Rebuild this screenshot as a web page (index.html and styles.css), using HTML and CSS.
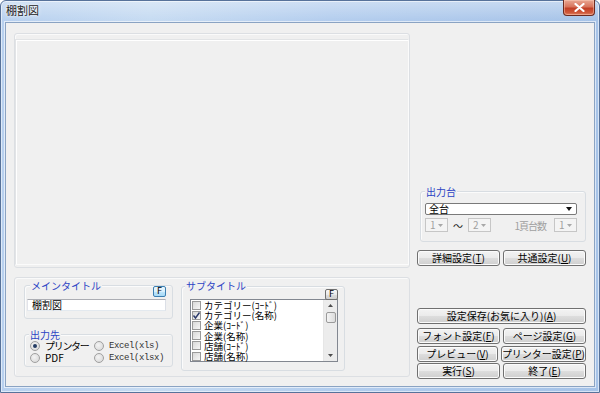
FILE: index.html
```html
<!DOCTYPE html>
<html lang="ja">
<head>
<meta charset="utf-8">
<title>棚割図</title>
<link rel="stylesheet" href="styles.css">
</head>
<body>
<div class="window">
  <div class="titlebar">
    <span class="title">棚割図</span>
    <div class="close">
      <svg width="11" height="9" viewBox="0 0 11 9"><path d="M1.5 1 L9.5 8 M9.5 1 L1.5 8" stroke="#fff" stroke-width="2.2" stroke-linecap="round"/></svg>
    </div>
  </div>
  <div class="client">
    <div class="left">
      <div class="bigbox"><div class="preview"></div></div>
      <div class="bottombox">
        <div class="col1">
          <div class="group g-main">
            <div class="group-head">
              <span class="group-label">メインタイトル</span>
              <span class="fbtn fbtn-hot">F</span>
            </div>
            <div class="textbox">棚割図</div>
          </div>
          <div class="group g-dest">
            <div class="group-head">
              <span class="group-label">出力先</span>
            </div>
            <div class="radios">
              <span class="radio checked"><span class="rdot"></span><span class="kana">プリンター</span></span>
              <span class="radio"><span class="rdot"></span><span class="mono">Excel(xls)</span></span>
              <span class="radio"><span class="rdot"></span>PDF</span>
              <span class="radio"><span class="rdot"></span><span class="mono">Excel(xlsx)</span></span>
            </div>
          </div>
        </div>
        <div class="group g-sub">
          <div class="group-head">
            <span class="group-label">サブタイトル</span>
            <span class="fbtn">F</span>
          </div>
          <div class="listbox">
            <div class="items">
              <div class="item"><span class="cb"></span>カテゴリー(ｺｰﾄﾞ)</div>
              <div class="item"><span class="cb"><svg width="9" height="9" viewBox="0 0 9 9"><path d="M1.5 4.5 L3.5 7 L7.5 1.5" stroke="#2b3a6b" stroke-width="1.4" fill="none"/></svg></span>カテゴリー(名称)</div>
              <div class="item"><span class="cb"></span>企業(ｺｰﾄﾞ)</div>
              <div class="item"><span class="cb"></span>企業(名称)</div>
              <div class="item"><span class="cb"></span>店舗(ｺｰﾄﾞ)</div>
              <div class="item"><span class="cb"></span>店舗(名称)</div>
            </div>
            <div class="scrollbar">
              <div class="sb-arrow"><svg width="5" height="3" viewBox="0 0 5 3"><path d="M0 3 L2.5 0 L5 3Z" fill="#4d4d4d"/></svg></div>
              <div class="sb-thumb"></div>
              <div class="sb-track"></div>
              <div class="sb-arrow"><svg width="5" height="3" viewBox="0 0 5 3"><path d="M0 0 L2.5 3 L5 0Z" fill="#4d4d4d"/></svg></div>
            </div>
          </div>
        </div>
      </div>
    </div>
    <div class="right">
      <div class="group g-out">
        <div class="group-head">
          <span class="group-label">出力台</span>
        </div>
        <div class="combo">
          <span>全台</span>
          <svg width="6" height="4" viewBox="0 0 6 4"><path d="M0 0 L6 0 L3 4Z" fill="#111"/></svg>
        </div>
        <div class="spinrow">
          <div class="spin"><span>1</span><svg width="5" height="3" viewBox="0 0 5 3"><path d="M0 0 L5 0 L2.5 3Z" fill="#a8a8a8"/></svg></div>
          <span class="tilde">〜</span>
          <div class="spin"><span>2</span><svg width="5" height="3" viewBox="0 0 5 3"><path d="M0 0 L5 0 L2.5 3Z" fill="#a8a8a8"/></svg></div>
          <span class="spin-label">1頁台数</span>
          <div class="spin"><span>1</span><svg width="5" height="3" viewBox="0 0 5 3"><path d="M0 0 L5 0 L2.5 3Z" fill="#a8a8a8"/></svg></div>
        </div>
      </div>
      <div class="btnrow row-detail">
        <div class="btn">詳細設定(<u>T</u>)</div>
        <div class="btn">共通設定(<u>U</u>)</div>
      </div>
      <div class="btn btn-wide">設定保存(お気に入り)(<u>A</u>)</div>
      <div class="btnrow row-a">
        <div class="btn">フォント設定(<u>F</u>)</div>
        <div class="btn">ページ設定(<u>G</u>)</div>
      </div>
      <div class="btnrow row-b">
        <div class="btn">プレビュー(<u>V</u>)</div>
        <div class="btn">プリンター設定(<u>P</u>)</div>
      </div>
      <div class="btnrow row-c">
        <div class="btn">実行(<u>S</u>)</div>
        <div class="btn">終了(<u>E</u>)</div>
      </div>
    </div>
  </div>
</div>
</body>
</html>
```

FILE: styles.css
```css
html, body {
  margin: 0;
  padding: 0;
}
body {
  width: 600px;
  height: 393px;
  overflow: hidden;
  font-family: "Noto Sans CJK JP", "Noto Sans", sans-serif;
  font-size: 10px;
  color: #000;
  background: #fff;
}
.window {
  width: 600px;
  height: 393px;
  box-sizing: border-box;
  border: 1px solid #57729a;
  border-radius: 6px 6px 0 0;
  background:
    linear-gradient(180deg, rgba(255,255,255,0.35) 0px, rgba(255,255,255,0) 20px),
    linear-gradient(90deg, #b7d0ef 0%, #c6dbf2 25%, #b3cdee 55%, #a6c3e8 100%);
  display: flex;
  flex-direction: column;
  box-shadow: inset 0 0 0 1px rgba(255,255,255,0.55);
}
.titlebar {
  height: 21px;
  flex: none;
  display: flex;
  justify-content: space-between;
  align-items: flex-start;
  padding-left: 5px;
}
.title {
  margin-top: 3px;
  font-size: 11px;
  line-height: 13px;
  color: #222;
  text-shadow: 0 0 4px rgba(255,255,255,0.9), 0 0 2px #fff;
}
.close {
  width: 32px;
  height: 16px;
  margin-right: 4px;
  margin-top: -1px;
  box-sizing: border-box;
  border: 1px solid #6b2a20;
  border-top: none;
  border-radius: 0 0 4px 4px;
  background: linear-gradient(180deg, #e9a793 0%, #d8745c 45%, #c23f26 55%, #cf5a3c 85%, #e0876a 100%);
  box-shadow: inset 0 0 0 1px rgba(255,210,190,0.45);
  display: flex;
  align-items: center;
  justify-content: center;
}
.client {
  flex: 1;
  margin: 0 4px 5px 4px;
  border: 1px solid #8aa3c3;
  background: #f0f0f0;
  display: flex;
  gap: 7px;
  padding: 10px 8px 7px 8px;
  box-shadow: 0 0 0 1px rgba(255,255,255,0.6);
}
.left {
  width: 396px;
  display: flex;
  flex-direction: column;
}
.bigbox {
  height: 235px;
  box-sizing: border-box;
  border: 1px solid #dcdfe3;
  border-radius: 3px;
  padding: 5px 0 2px 0;
  display: flex;
  flex-direction: column;
  box-shadow: inset 1px 1px 0 #fafafa;
}
.preview {
  flex: 1;
  border: 1px solid #e2e4e6;
  border-right-color: #fbfbfb;
  border-bottom-color: #fbfbfb;
  box-shadow: inset 1px 1px 0 #fff;
}
.bottombox {
  margin-top: 9px;
  height: 100px;
  box-sizing: border-box;
  border: 1px solid #dcdfe3;
  border-radius: 3px;
  display: flex;
  align-items: flex-start;
  gap: 8px;
  padding: 7px 0 0 9px;
  box-shadow: inset 1px 1px 0 #fafafa;
}
.col1 {
  width: 149px;
  display: flex;
  flex-direction: column;
  gap: 15px;
}
.group {
  box-sizing: border-box;
  border: 1px solid #d8dde2;
  border-radius: 3px;
  box-shadow: inset 1px 1px 0 #fbfbfb;
}
.group-head {
  display: flex;
  justify-content: space-between;
  align-items: flex-start;
  margin-top: -6px;
}
.group-label {
  color: #2c43c4;
  background: #f0f0f0;
  line-height: 11px;
  padding: 0 1px;
  margin-left: 3px;
}
.fbtn {
  width: 13px;
  height: 11px;
  margin-top: 6px;
  box-sizing: border-box;
  border: 1px solid #707070;
  border-radius: 2px;
  background: linear-gradient(180deg, #f6f6f6 0%, #e9e9e9 50%, #dcdcdc 51%, #d0d0d0 100%);
  font-size: 9px;
  line-height: 9px;
  text-align: center;
  font-family: "DejaVu Sans", sans-serif;
}
.fbtn-hot {
  border-color: #3c7fb1;
  background: linear-gradient(180deg, #eaf6fd 0%, #d9f0fc 50%, #bee6fd 51%, #a7d9f5 100%);
}
.g-main {
  padding: 0 6px 7px 2px;
}
.textbox {
  margin-top: 2px;
  height: 12px;
  box-sizing: border-box;
  border: 1px solid #abadb3;
  border-left-color: #e2e3ea;
  border-right-color: #dbdfe6;
  border-bottom-color: #e3e9ef;
  background: #fff;
  line-height: 10px;
  padding-left: 4px;
}
.g-dest {
  padding: 0 2px 2px 5px;
}
.g-dest .group-label {
  margin-left: -1px;
}
.radios {
  display: grid;
  grid-template-columns: 64px auto;
  grid-auto-rows: 12px;
}
.radio {
  display: flex;
  align-items: center;
  gap: 5px;
  line-height: 12px;
  white-space: nowrap;
}
.kana {
  letter-spacing: -1.3px;
}
.mono {
  font-family: "Liberation Mono", "DejaVu Sans Mono", monospace;
  font-size: 9px;
  letter-spacing: -0.4px;
  color: #333;
}
.rdot {
  width: 10px;
  height: 10px;
  flex: none;
  box-sizing: border-box;
  border-radius: 50%;
  border: 1px solid #a0a0a0;
  background: radial-gradient(circle at 40% 40%, #f4f4f4 0%, #d4d4d4 100%);
  display: flex;
  align-items: center;
  justify-content: center;
}
.radio.checked .rdot::after {
  content: "";
  width: 4px;
  height: 4px;
  border-radius: 50%;
  background: #243c63;
}
.g-sub {
  width: 164px;
  height: 85px;
  margin-top: 1px;
  padding: 0 6px 0 8px;
}
.g-sub .group-label {
  margin-left: -5px;
}
.g-sub .group-head {
  margin-top: -7px;
}
.g-sub .fbtn {
  margin-top: 9px;
}
.listbox {
  margin-top: -1px;
  height: 63px;
  box-sizing: border-box;
  border: 1px solid #828790;
  background: #fff;
  display: flex;
}
.items {
  flex: 1;
  padding-left: 1px;
}
.item {
  height: 10.2px;
  line-height: 10.2px;
  font-size: 9.5px;
  display: flex;
  align-items: center;
  gap: 3px;
  white-space: nowrap;
}
.cb {
  width: 9px;
  height: 9px;
  flex: none;
  box-sizing: border-box;
  border: 1px solid #9a9a9a;
  background: linear-gradient(135deg, #d8d8d8 0%, #f6f6f6 100%);
  display: flex;
  align-items: center;
  justify-content: center;
}
.cb svg {
  margin: -1px;
}
.scrollbar {
  width: 13px;
  flex: none;
  background: #ececec;
  border-left: 1px solid #e6e6e6;
  display: flex;
  flex-direction: column;
  align-items: center;
}
.sb-arrow {
  height: 11px;
  width: 12px;
  display: flex;
  align-items: center;
  justify-content: center;
}
.sb-thumb {
  width: 10px;
  height: 11px;
  margin-top: 1px;
  box-sizing: border-box;
  border: 1px solid #9a9a9a;
  border-radius: 2px;
  background: linear-gradient(90deg, #f4f4f4, #dcdcdc);
}
.sb-track {
  flex: 1;
}
.right {
  width: 169px;
  display: flex;
  flex-direction: column;
  justify-content: flex-end;
}
.g-out {
  height: 51px;
  margin-left: 3px;
  padding: 0 8px 0 4px;
}
.g-out .group-label {
  margin-left: 0;
}
.combo {
  margin-top: 6px;
  height: 12px;
  box-sizing: border-box;
  border: 1px solid #7a7a7a;
  border-radius: 2px;
  background: #fff;
  display: flex;
  align-items: center;
  justify-content: space-between;
  padding: 0 4px 0 3px;
  line-height: 10px;
}
.spinrow {
  margin-top: 3px;
  height: 14px;
  display: flex;
  align-items: center;
}
.spin {
  width: 23px;
  height: 14px;
  box-sizing: border-box;
  border: 1px solid #c6c6c6;
  background: #f4f4f4;
  color: #a0a0a0;
  display: flex;
  align-items: center;
  justify-content: space-between;
  padding: 0 4px 0 4px;
  line-height: 12px;
}
.tilde {
  margin: 0 5px;
  color: #222;
}
.spin-label {
  margin-left: auto;
  margin-right: 8px;
  color: #a0a0a0;
  letter-spacing: -1px;
}
.btnrow {
  display: flex;
  gap: 3px;
}
.btnrow .btn {
  flex: 1;
}
.row-detail {
  margin-top: 8px;
}
.btn-wide {
  margin-top: 42px;
}
.row-a {
  margin-top: 4px;
}
.row-b {
  margin-top: 2px;
}
.row-c {
  margin-top: 1px;
}
.btn {
  height: 16px;
  box-sizing: border-box;
  border: 1px solid #707070;
  border-radius: 3px;
  background: linear-gradient(180deg, #f3f3f3 0%, #ebebeb 48%, #dddddd 52%, #cfcfcf 100%);
  box-shadow: inset 0 0 0 1px #fbfbfb;
  display: flex;
  align-items: center;
  justify-content: center;
  line-height: 12px;
  white-space: nowrap;
}
.btn u {
  text-underline-offset: 1px;
}
```
